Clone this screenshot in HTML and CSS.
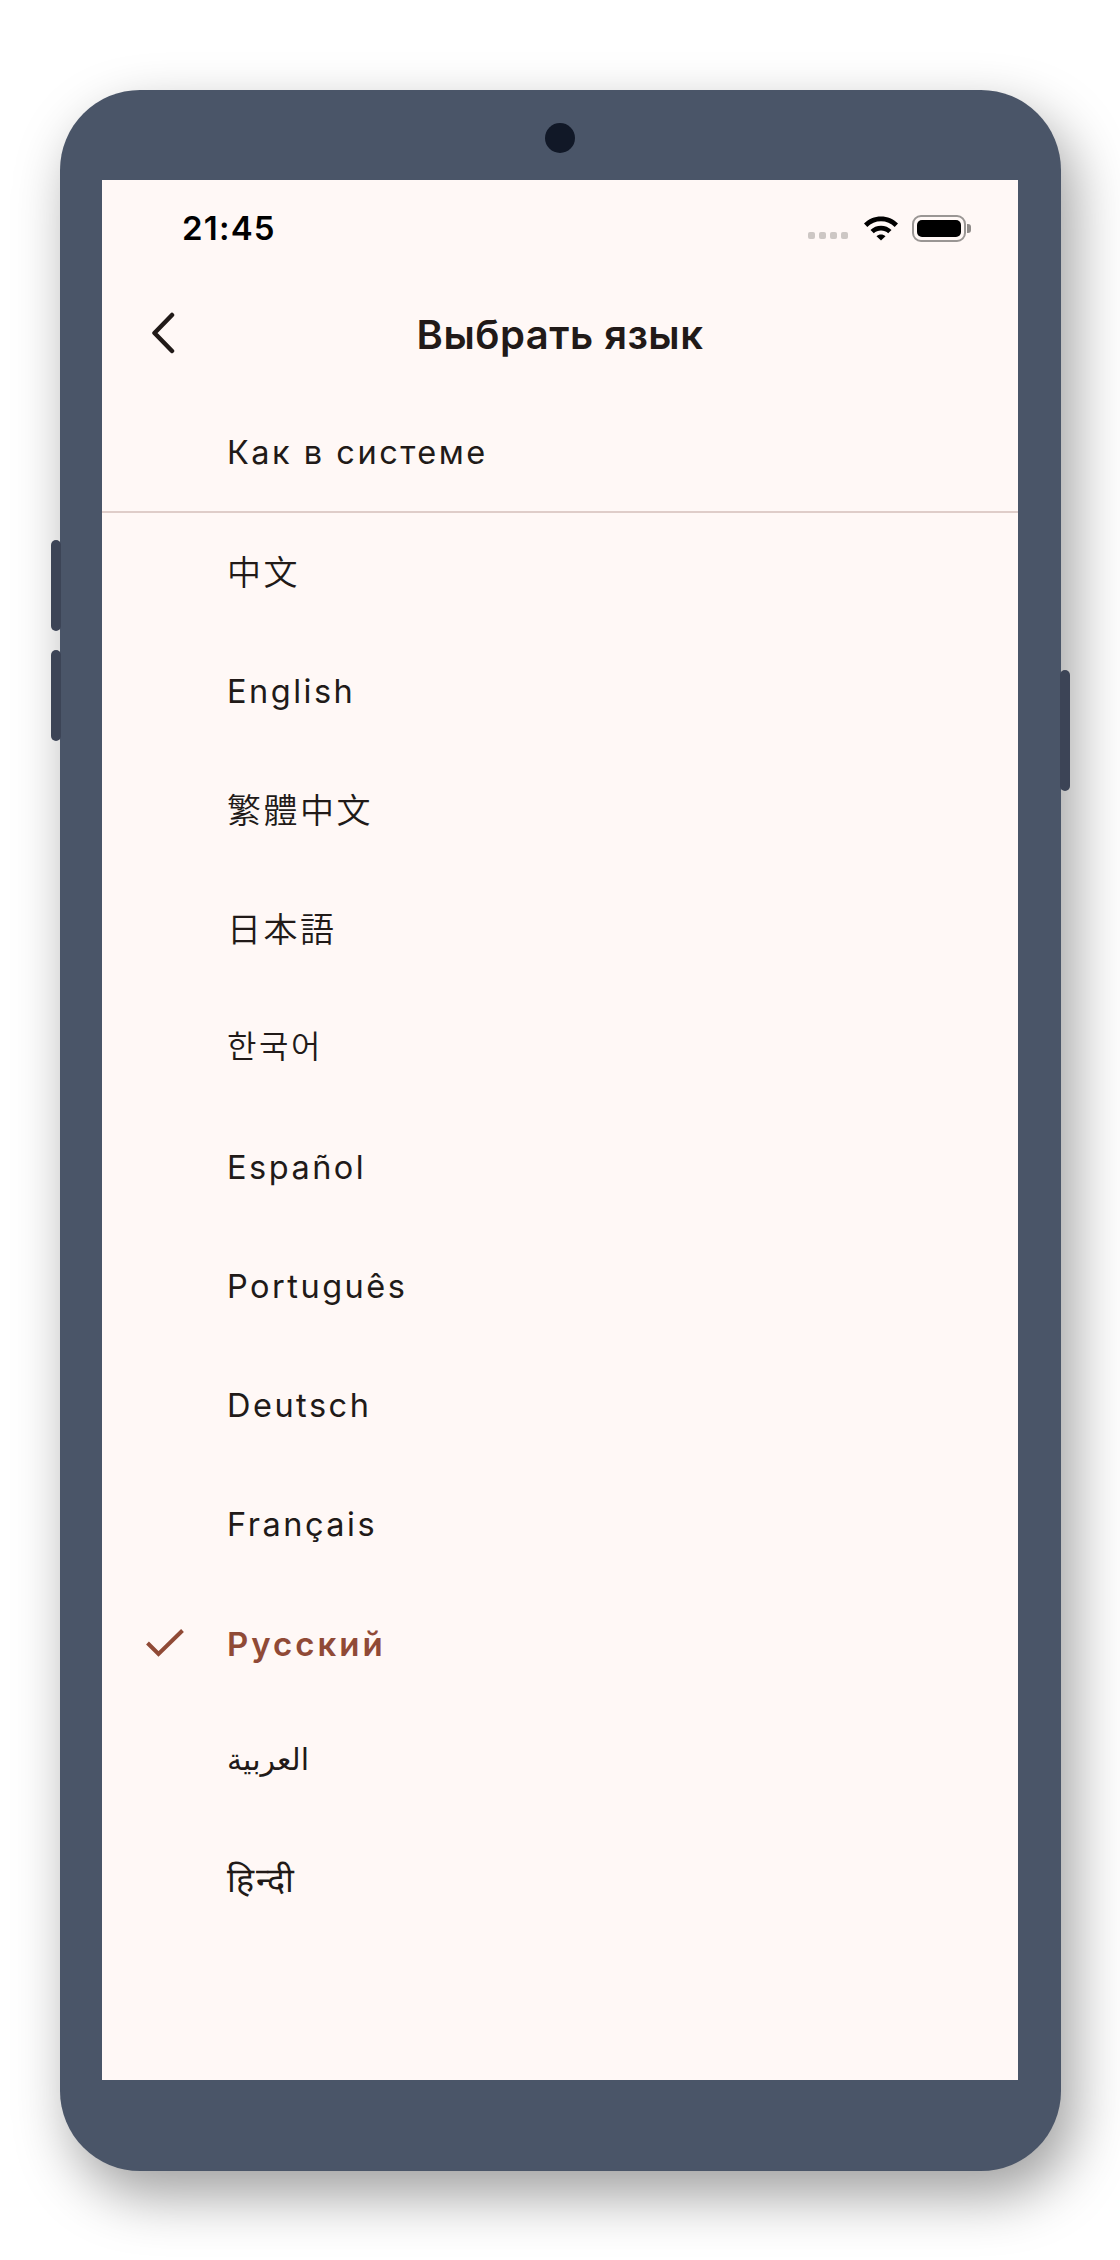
FILE: index.html
```html
<!DOCTYPE html>
<html lang="ru">

<head>
  <meta charset="UTF-8">
  <meta name="viewport" content="width=device-width, initial-scale=1.0">
  <title>Выбрать язык</title>
  <link rel="stylesheet" href="styles.css">
</head>

<body>
  <div class="phone">
    <span class="side-btn vol-up"></span>
    <span class="side-btn vol-down"></span>
    <span class="side-btn power"></span>
    <span class="camera"></span>

    <div class="screen">
      <div class="status-bar">
        <span class="time">21:45</span>
        <div class="status-icons">
          <div class="signal"><i></i><i></i><i></i><i></i></div>
          <svg class="wifi" width="36" height="26" viewBox="0 0 36 26">
            <path d="M1 8.6C5.500 4 11.500 1.500 18 1.500S30.500 4 35 8.600l-3.300 3.300C28 8.300 23.300 6.300 18 6.300S8 8.300 4.300 11.900Z" />
            <path d="M7.500 15C10.300 12.300 14 10.800 18 10.800S25.700 12.300 28.500 15l-3.300 3.300C23.300 16.500 20.800 15.500 18 15.500S12.700 16.500 10.800 18.300Z" />
            <path d="M13.500 21.300C14.700 20.200 16.300 19.600 18 19.600S21.300 20.200 22.500 21.300L18 25.500Z" />
          </svg>
          <div class="battery"><div class="battery-fill"></div></div>
          <span class="battery-nub"></span>
        </div>
      </div>

      <div class="app-bar">
        <svg class="back" width="24" height="42" viewBox="0 0 24 42">
          <path d="M21 3 3.500 21 21 39" />
        </svg>
        <h1>Выбрать язык</h1>
      </div>

      <ul class="lang-list">
        <li class="lang-row system">Как в системе</li>
        <li class="lang-row sc">中文</li>
        <li class="lang-row">English</li>
        <li class="lang-row tc">繁體中文</li>
        <li class="lang-row jp">日本語</li>
        <li class="lang-row kr">한국어</li>
        <li class="lang-row">Español</li>
        <li class="lang-row">Português</li>
        <li class="lang-row">Deutsch</li>
        <li class="lang-row">Français</li>
        <li class="lang-row active">
          <svg class="check" width="38" height="28" viewBox="0 0 38 28">
            <path d="M1.500 14 12.500 25 36.500 1.500" />
          </svg>
          Русский
        </li>
        <li class="lang-row ar">العربية</li>
        <li class="lang-row hi">हिन्दी</li>
      </ul>
    </div>
  </div>
</body>

</html>
```

FILE: styles.css
```css
* {
  box-sizing: border-box;
}

html,
body {
  height: 100%;
}

body {
  margin: 0;
  padding: 90px 0 0 60px;
  background-color: #fff;
  overflow: hidden;
  font-family: Inter, "Noto Sans CJK SC", "DejaVu Sans", sans-serif;
  color: #211a18;
}

.phone {
  position: relative;
  width: 1001px;
  height: 2081px;
  padding: 90px 43px 91px 42px;
  background-color: #4a5568;
  border-radius: 80px;
  box-shadow: 12px 24px 56px rgba(0, 0, 0, 0.38);
}

.side-btn {
  position: absolute;
  width: 10px;
  background-color: #3c4456;
  border-radius: 5px;
}

.vol-up {
  left: -9px;
  top: 450px;
  height: 91px;
}

.vol-down {
  left: -9px;
  top: 560px;
  height: 91px;
}

.power {
  right: -9px;
  top: 580px;
  height: 121px;
}

.camera {
  position: absolute;
  left: 485px;
  top: 33px;
  width: 30px;
  height: 30px;
  background-color: #111827;
  border-radius: 50%;
}

.screen {
  height: 100%;
  background-color: #fff8f6;
}

/* status bar */
.status-bar {
  display: flex;
  align-items: center;
  justify-content: space-between;
  height: 96px;
  padding: 0 47px 0 80px;
}

.time {
  font-size: 33px;
  font-weight: 600;
  letter-spacing: 1.200px;
  color: #000;
}

.status-icons {
  display: flex;
  align-items: center;
}

.signal {
  display: flex;
  gap: 4px;
  margin: 14px 15px 0 0;
}

.signal i {
  width: 7px;
  height: 7px;
  background-color: #cdc7c4;
  border-radius: 2px;
}

.wifi {
  fill: #000;
  margin-right: 13px;
}

.battery {
  width: 54px;
  height: 27px;
  padding: 3px;
  border: 2px solid #9a9694;
  border-radius: 9px;
}

.battery-fill {
  height: 100%;
  background-color: #000;
  border-radius: 5px;
}

.battery-nub {
  width: 4px;
  height: 9px;
  margin-left: 1px;
  background-color: #8f8b89;
  border-radius: 0 3px 3px 0;
}

/* app bar */
.app-bar {
  position: relative;
  display: flex;
  align-items: center;
  justify-content: center;
  height: 117px;
}

.app-bar h1 {
  margin: 0;
  font-size: 40px;
  font-weight: 600;
  letter-spacing: 0.500px;
}

.back {
  position: absolute;
  left: 49px;
  top: 36px;
  fill: none;
  stroke: #211a18;
  stroke-width: 4.500;
  stroke-linecap: round;
  stroke-linejoin: round;
}

/* language list */
.lang-list {
  margin: 0;
  padding: 0;
  list-style: none;
}

.lang-row {
  position: relative;
  display: flex;
  align-items: center;
  height: 119px;
  padding-left: 125px;
  font-size: 32.500px;
  letter-spacing: 2.500px;
}

.system {
  height: 120px;
  border-bottom: 2px solid #dfcdc9;
}

.sc,
.tc,
.jp {
  padding-bottom: 5px;
  font-size: 34px;
  font-weight: 350;
}

.tc {
  font-family: Inter, "Noto Sans CJK TC", sans-serif;
}

.jp {
  font-family: Inter, "Noto Sans CJK JP", sans-serif;
}

.kr {
  padding-bottom: 10px;
  font-family: Inter, "Noto Sans CJK KR", sans-serif;
  font-size: 32px;
  font-weight: 350;
}

.ar {
  padding-bottom: 8px;
  font-size: 30px;
  letter-spacing: 0;
}

.hi {
  padding-bottom: 6px;
  font-size: 34px;
  letter-spacing: 1.500px;
}

.active {
  font-size: 33px;
  font-weight: 600;
  letter-spacing: 3px;
  color: #904a36;
}

.check {
  position: absolute;
  left: 44px;
  top: 45px;
  fill: none;
  stroke: #904a36;
  stroke-width: 4;
}
```
